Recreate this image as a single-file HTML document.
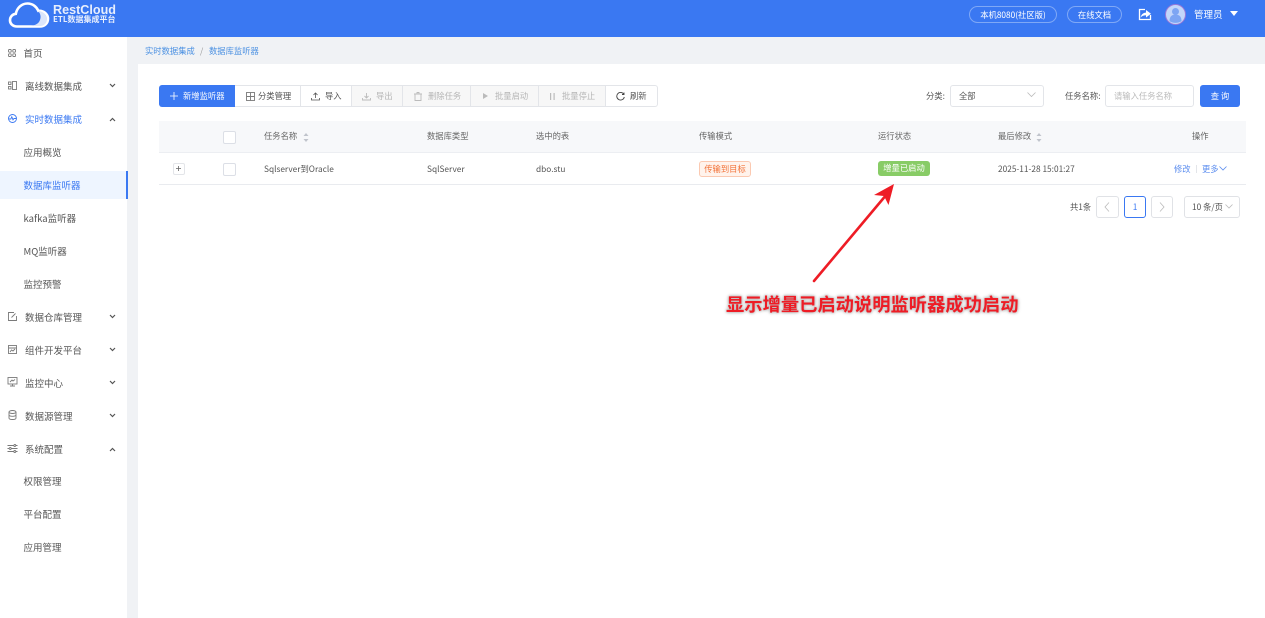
<!DOCTYPE html>
<html lang="zh-CN"><head><meta charset="utf-8"><title>RestCloud</title>
<style>
html{margin:0;padding:0;background:#fff;width:1265px;height:618px;overflow:hidden}
body{margin:0;padding:0;background:#fff;width:1265px;height:618px;overflow:hidden;position:relative;font-family:"Noto Sans CJK SC","Liberation Sans",sans-serif;font-size:9.5px;color:#555}
div,span.a,svg{position:absolute}
#w{left:0;top:0;width:1285px;height:638px;filter:blur(.25px)}
.t{white-space:nowrap;line-height:14px;height:14px}
.s{font-size:8.3px}
.ic{fill:none;stroke:#7a7a7a;stroke-width:.9}
.btn{top:85px;height:20px;background:#fff;border:1px solid #e3e5e9;border-left:0;box-sizing:content-box}
.dis{background:#f7f7f7}
.g{color:#b5b5b5}
.h{color:#666}
.chk{width:11px;height:11px;border:1px solid #dcdfe6;border-radius:2px;background:#fff}
.pg{top:196px;height:20px;border:1px solid #e0e2e6;border-radius:3px;background:#fff}
</style></head><body><div id="w">
<!-- header -->
<div style="left:0;top:0;width:1285px;height:36.500px;background:#3a78f2"></div>
<svg style="left:8px;top:1px" width="42" height="28" viewBox="0 0 42 28"><path d="M9 25.500C4.500 25.500 2 22.500 2 19.200c0-3.400 2.500-6 5.800-6.400C9 7 13.500 2.500 19.500 2.500c5 0 9 3 10.800 7.300 5-.5 9.700 3 9.700 8 0 4.500-3.500 7.700-8 7.700z" fill="none" stroke="#fff" stroke-width="2.600"/><path d="M30 10c3 3 3.500 7 1 11-2 2.500-5 3.500-8 4h9c4 0 7-3 7-7 0-4-4-8-9-8z" fill="#dbe6fb"/></svg>
<div class="t" style="left:53px;top:2px;color:#fff;font-family:'Liberation Sans',sans-serif;font-size:12.600px;font-weight:bold;line-height:16px;height:16px;opacity:.88">RestCloud</div>
<div class="t" style="left:53px;top:13px;color:#fff;font-size:8px;font-weight:bold;opacity:.88">ETL数据集成平台</div>
<div class="t s" style="left:969px;top:6px;width:86px;height:15px;border:1px solid #7fa8f6;border-radius:9px;color:#fff;text-align:center;line-height:16px">本机8080(社区版)</div>
<div class="t s" style="left:1067px;top:6px;width:53px;height:15px;border:1px solid #7fa8f6;border-radius:9px;color:#fff;text-align:center;line-height:16px">在线文档</div>
<svg style="left:1138px;top:8px" width="14" height="13" viewBox="0 0 14 13"><path d="M7 1.500H1.500v10h11V7" fill="none" stroke="#fff" stroke-width="1.300"/><path d="M2.500 9.500C3.500 6 5.500 4.800 8 4.600V2l5 3.800-5 3.700V7.200C6 7.200 4 8 2.500 9.500z" fill="#fff"/></svg>
<svg style="left:1165px;top:4px" width="21" height="21" viewBox="0 0 21 21"><circle cx="10.500" cy="10.500" r="10" fill="#c3d6fa" stroke="#9a78d8"/><circle cx="10.500" cy="7.500" r="3.500" fill="#7da5f3"/><path d="M4.500 17c0-5 3-6.500 6-6.500s6 1.500 6 6.500c-3 2.500-9 2.500-12 0z" fill="#7da5f3"/></svg>
<div class="t" style="left:1194px;top:7px;color:#fff;font-size:9.500px">管理员</div>
<svg style="left:1230px;top:11px" width="8" height="5"><path d="M0 0h8L4 5z" fill="#fff"/></svg>

<!-- layout backgrounds -->
<div style="left:127px;top:36.500px;width:1158px;height:602px;background:#f0f2f5"></div>
<div style="left:138px;top:64px;width:1147px;height:574px;background:#fff"></div>
<div style="left:0;top:36.500px;width:127px;height:602px;background:#fff"></div>

<!-- sidebar -->
<div style="left:0;top:171px;width:127px;height:28px;background:#eef5ff"></div>
<div style="left:125.500px;top:171px;width:2px;height:28px;background:#3a78f2"></div>
<svg style="left:8px;top:49px" width="8" height="8" viewBox="0 0 8 8" class="ic"><rect x=".5" y=".5" width="2.700" height="2.700" rx=".8"/><rect x="4.800" y=".5" width="2.700" height="2.700" rx=".8"/><rect x=".5" y="4.800" width="2.700" height="2.700" rx=".8"/><rect x="4.800" y="4.800" width="2.700" height="2.700" rx=".8"/></svg>
<div class="t" style="left:23.500px;top:46px">首页</div>
<svg style="left:8px;top:81px" width="9" height="9" viewBox="0 0 9 9" class="ic"><rect x="4.500" y=".5" width="4" height="8"/><rect x=".5" y="1" width="2.500" height="2.500"/><rect x=".5" y="5.500" width="2.500" height="2.500"/></svg>
<div class="t" style="left:25px;top:79px">离线数据集成</div>
<svg style="left:8px;top:114px" width="9" height="9" viewBox="0 0 9 9" fill="none" stroke="#3a78f2" stroke-width=".9"><circle cx="4.500" cy="4.500" r="4"/><path d="M1 5h1.800l1-2.200 1.200 3L6 4.500h2"/></svg>
<div class="t" style="left:25px;top:112px;color:#3a78f2">实时数据集成</div>
<div class="t" style="left:23.500px;top:145px">应用概览</div>
<div class="t" style="left:23.500px;top:178px;color:#3a78f2">数据库监听器</div>
<div class="t" style="left:23.500px;top:211px">kafka监听器</div>
<div class="t" style="left:23.500px;top:244px">MQ监听器</div>
<div class="t" style="left:23.500px;top:277px">监控预警</div>
<svg style="left:8px;top:312px" width="9" height="9" viewBox="0 0 9 9" class="ic"><path d="M8.500 4v4.500h-8v-8H6"/><path d="M3.500 5.500 7.500 1.500"/></svg>
<div class="t" style="left:25px;top:310px">数据仓库管理</div>
<svg style="left:8px;top:345px" width="9" height="9" viewBox="0 0 9 9" class="ic"><rect x=".5" y=".5" width="8" height="8"/><path d="M.5 3h8M2 7l1.500-2 1.500 1 2-2"/></svg>
<div class="t" style="left:25px;top:343px">组件开发平台</div>
<svg style="left:7px;top:377px" width="11" height="10" viewBox="0 0 11 10" class="ic"><rect x="1" y=".5" width="9" height="6.500"/><path d="M3 9h5M5.500 7v2M3 5l2-2 1 1 2-1.500"/></svg>
<div class="t" style="left:25px;top:376px">监控中心</div>
<svg style="left:8px;top:410px" width="9" height="10" viewBox="0 0 9 10" class="ic"><ellipse cx="4.500" cy="2" rx="3.500" ry="1.500"/><path d="M1 2v6c0 1 1.500 1.500 3.500 1.500S8 9 8 8V2M1 4.800c0 1 1.500 1.500 3.500 1.500S8 5.800 8 4.800"/></svg>
<div class="t" style="left:25px;top:409px">数据源管理</div>
<svg style="left:7px;top:444px" width="11" height="9" viewBox="0 0 11 9" class="ic"><path d="M.5 1.500h6M9 1.500h1.500M.5 4.500h1.500M4.500 4.500h6M.5 7.500h6M9 7.500h1.500"/><circle cx="7.800" cy="1.500" r="1"/><circle cx="3.200" cy="4.500" r="1"/><circle cx="7.800" cy="7.500" r="1"/></svg>
<div class="t" style="left:25px;top:442px">系统配置</div>
<div class="t" style="left:23.500px;top:474px">权限管理</div>
<div class="t" style="left:23.500px;top:507px">平台配置</div>
<div class="t" style="left:23.500px;top:540px">应用管理</div>
<svg style="left:109px;top:83px" width="7" height="5" fill="none" stroke="#555" stroke-width="1.200"><path d="M1 1l2.500 2.500L6 1"/></svg>
<svg style="left:109px;top:117px" width="7" height="5" fill="none" stroke="#555" stroke-width="1.200"><path d="M1 4l2.500-2.500L6 4"/></svg>
<svg style="left:109px;top:314px" width="7" height="5" fill="none" stroke="#555" stroke-width="1.200"><path d="M1 1l2.500 2.500L6 1"/></svg>
<svg style="left:109px;top:347px" width="7" height="5" fill="none" stroke="#555" stroke-width="1.200"><path d="M1 1l2.500 2.500L6 1"/></svg>
<svg style="left:109px;top:380px" width="7" height="5" fill="none" stroke="#555" stroke-width="1.200"><path d="M1 1l2.500 2.500L6 1"/></svg>
<svg style="left:109px;top:413px" width="7" height="5" fill="none" stroke="#555" stroke-width="1.200"><path d="M1 1l2.500 2.500L6 1"/></svg>
<svg style="left:109px;top:447px" width="7" height="5" fill="none" stroke="#555" stroke-width="1.200"><path d="M1 4l2.500-2.500L6 4"/></svg>

<!-- breadcrumb -->
<div class="t s" style="left:145px;top:44px;color:#4a90e2">实时数据集成</div>
<div class="t s" style="left:200px;top:44px;color:#999">/</div>
<div class="t s" style="left:209px;top:44px;color:#4a90e2">数据库监听器</div>

<!-- toolbar -->
<div style="left:159px;top:85px;width:76px;height:22px;background:#3a78f2;border-radius:3px 0 0 3px"></div>
<div class="btn" style="left:235px;width:65px"></div>
<div class="btn" style="left:301px;width:50px"></div>
<div class="btn dis" style="left:352px;width:50px"></div>
<div class="btn dis" style="left:403px;width:67px"></div>
<div class="btn dis" style="left:471px;width:67px"></div>
<div class="btn dis" style="left:539px;width:66px"></div>
<div class="btn" style="left:606px;width:51px;border-radius:0 3px 3px 0"></div>
<div style="left:300px;top:85px;width:1px;height:22px;background:#e3e5e9"></div>
<div style="left:351px;top:85px;width:1px;height:22px;background:#e3e5e9"></div>
<div style="left:402px;top:85px;width:1px;height:22px;background:#e3e5e9"></div>
<div style="left:470px;top:85px;width:1px;height:22px;background:#e3e5e9"></div>
<div style="left:538px;top:85px;width:1px;height:22px;background:#e3e5e9"></div>
<div style="left:605px;top:85px;width:1px;height:22px;background:#e3e5e9"></div>
<svg style="left:170px;top:92px" width="8" height="8" stroke="#fff" stroke-width=".8"><path d="M4 0v8M0 4h8"/></svg>
<div class="t s" style="left:183px;top:89px;color:#fff">新增监听器</div>
<svg style="left:246px;top:92px" width="9" height="9" viewBox="0 0 9 9" class="ic"><rect x=".5" y=".5" width="8" height="8"/><path d="M4.500 .5v8M.5 4.500h8"/></svg>
<div class="t s" style="left:258px;top:89px">分类管理</div>
<svg style="left:311px;top:92px" width="9" height="9" viewBox="0 0 9 9" fill="none" stroke="#555" stroke-width=".8"><path d="M4.500 6V1M2.500 3l2-2 2 2M.5 6v2h8V6"/></svg>
<div class="t s" style="left:325px;top:89px">导入</div>
<svg style="left:362px;top:92px" width="9" height="9" viewBox="0 0 9 9" fill="none" stroke="#bbb" stroke-width=".9"><path d="M4.500 1v5M2.500 4l2 2 2-2M.5 6v2h8V6"/></svg>
<div class="t g s" style="left:376px;top:89px">导出</div>
<svg style="left:414px;top:92px" width="8" height="9" viewBox="0 0 8 9" fill="none" stroke="#bbb" stroke-width=".9"><path d="M0 2h8M3 2V.5h2V2M1 2v6.500h6V2"/></svg>
<div class="t g s" style="left:428px;top:89px">删除任务</div>
<svg style="left:483px;top:93px" width="5" height="6"><path d="M0 0l5 3-5 3z" fill="#bbb"/></svg>
<div class="t g s" style="left:495px;top:89px">批量启动</div>
<svg style="left:550px;top:93px" width="5" height="7" fill="#bbb"><rect width="1.200" height="7"/><rect x="3.500" width="1.200" height="7"/></svg>
<div class="t g s" style="left:562px;top:89px">批量停止</div>
<svg style="left:616px;top:92px" width="9" height="9" viewBox="0 0 9 9" fill="none" stroke="#444" stroke-width=".9"><path d="M7.800 2.200A3.800 3.800 0 1 0 8.300 5"/><path d="M8 .5v2H6" /></svg>
<div class="t s" style="left:630px;top:89px">刷新</div>

<!-- filters -->
<div class="t s" style="left:926px;top:89px">分类:</div>
<div style="left:950px;top:85px;width:92px;height:20px;border:1px solid #e3e5e9;border-radius:3px"></div>
<div class="t s" style="left:959px;top:89px">全部</div>
<svg style="left:1027px;top:92px" width="9" height="6" fill="none" stroke="#bbb" stroke-width=".8"><path d="M.5 .5l4 4 4-4"/></svg>
<div class="t s" style="left:1065px;top:89px">任务名称:</div>
<div style="left:1105px;top:85px;width:87px;height:20px;border:1px solid #e3e5e9;border-radius:3px"></div>
<div class="t s" style="left:1114px;top:89px;color:#bbb">请输入任务名称</div>
<div style="left:1200px;top:85px;width:40px;height:22px;background:#3a78f2;border-radius:3px"></div>
<div class="t s" style="left:1200px;top:89px;width:40px;text-align:center;color:#fff">查 询</div>

<!-- table -->
<div style="left:159px;top:121px;width:1087px;height:31px;background:#f7f8fa;border-bottom:1px solid #eceef2"></div>
<div style="left:159px;top:184px;width:1087px;height:1px;background:#e9ebef"></div>
<div class="chk" style="left:223px;top:131px"></div>
<div class="t h s" style="left:264px;top:129px">任务名称</div>
<svg style="left:303px;top:133px" width="6" height="9" fill="#c0c4cc"><path d="M3 0l2.500 3h-5zM3 9L.5 6h5z"/></svg>
<div class="t h s" style="left:427px;top:129px">数据库类型</div>
<div class="t h s" style="left:536px;top:129px">选中的表</div>
<div class="t h s" style="left:699px;top:129px">传输模式</div>
<div class="t h s" style="left:878px;top:129px">运行状态</div>
<div class="t h s" style="left:998px;top:129px">最后修改</div>
<svg style="left:1036px;top:133px" width="6" height="9" fill="#c0c4cc"><path d="M3 0l2.500 3h-5zM3 9L.5 6h5z"/></svg>
<div class="t h s" style="left:1192px;top:129px">操作</div>

<div style="left:173px;top:163px;width:10px;height:10px;border:1px solid #e3e5e9;border-radius:2px"></div>
<svg style="left:176px;top:166px" width="5" height="5" stroke="#666" stroke-width=".8"><path d="M2.500 0v5M0 2.500h5"/></svg>
<div class="chk" style="left:223px;top:163px"></div>
<div class="t s" style="left:264px;top:162px">Sqlserver到Oracle</div>
<div class="t s" style="left:427px;top:162px">SqlServer</div>
<div class="t s" style="left:536px;top:162px">dbo.stu</div>
<div class="t s" style="left:699px;top:161px;width:50px;height:14px;line-height:15px;border:1px solid #fbc9b1;background:#fff3ec;border-radius:3px;color:#f2733a;text-align:center">传输到目标</div>
<div class="t s" style="left:878px;top:161px;width:52px;height:15px;line-height:15px;background:#88cc66;border-radius:3px;color:#fff;text-align:center">增量已启动</div>
<div class="t s" style="left:998px;top:162px">2025-11-28 15:01:27</div>
<div class="t s" style="left:1174px;top:162px;color:#5b8def">修改</div>
<div style="left:1196px;top:165px;width:1px;height:8px;background:#e3e5e9"></div>
<div class="t s" style="left:1202px;top:162px;color:#5b8def">更多</div>
<svg style="left:1219px;top:166px" width="8" height="5" fill="none" stroke="#5b8def" stroke-width=".8"><path d="M.5 .5l3.500 3.500 3.500-3.500"/></svg>

<!-- pagination -->
<div class="t s" style="left:1070px;top:200px">共1条</div>
<div class="pg" style="left:1096px;width:21px"></div>
<svg style="left:1104px;top:202px" width="6" height="10" fill="none" stroke="#bbb" stroke-width=".8"><path d="M5 .5l-4 4.500 4 4.500"/></svg>
<div class="pg" style="left:1124px;width:20px;border-color:#3a78f2"></div>
<div class="t s" style="left:1124px;top:200px;width:22px;text-align:center;color:#3a78f2">1</div>
<div class="pg" style="left:1151px;width:20px"></div>
<svg style="left:1159px;top:202px" width="6" height="10" fill="none" stroke="#bbb" stroke-width=".8"><path d="M1 .5l4 4.500-4 4.500"/></svg>
<div class="pg" style="left:1184px;width:54px"></div>
<div class="t s" style="left:1192px;top:200px">10 条/页</div>
<svg style="left:1225px;top:204px" width="8" height="5" fill="none" stroke="#bbb" stroke-width=".8"><path d="M.5 .5l3.500 3.500 3.500-3.500"/></svg>

<!-- annotation -->
<svg style="left:805px;top:175px" width="100" height="115" viewBox="0 0 100 115"><path d="M9 106 82 19" stroke="#ee1c25" stroke-width="2.600" stroke-linecap="round"/><path d="M89 9 83.500 30 79 21 69 20z" fill="#ee1c25"/></svg>
<div class="t" style="left:726px;top:293px;height:22px;line-height:22px;font-size:18.300px;font-weight:bold;color:#ee1c25;text-shadow:0 0 2px #bbb,0 0 3px #bbb,0 0 4px #ccc">显示增量已启动说明监听器成功启动</div>
</div></body></html>
